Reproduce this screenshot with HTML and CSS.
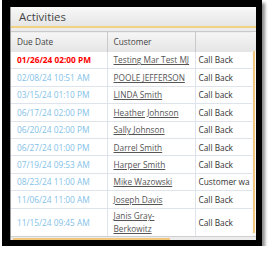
FILE: index.html
```html
<!doctype html>
<html lang="en">
<head>
  <meta charset="utf-8">
  <title>Activities</title>
  <link rel="stylesheet" href="styles.css">
</head>
<body>
  <div class="frame">
    <div class="panel">
      <div class="title">Activities</div>
      <div class="grid">
        <div class="scroller">
          <table>
            <colgroup>
              <col class="col-date">
              <col class="col-customer">
              <col class="col-type">
            </colgroup>
            <thead>
              <tr><th>Due Date</th><th>Customer</th><th></th></tr>
            </thead>
            <tbody>
              <tr><td class="due overdue">01/26/24 02:00 PM</td><td><a href="#">Testing Mar Test MJ</a></td><td>Call Back</td></tr>
              <tr><td class="due">02/08/24 10:51 AM</td><td><a href="#">POOLE JEFFERSON</a></td><td>Call Back</td></tr>
              <tr><td class="due">03/15/24 01:10 PM</td><td><a href="#">LINDA Smith</a></td><td>Call back</td></tr>
              <tr><td class="due">06/17/24 02:00 PM</td><td><a href="#">Heather Johnson</a></td><td>Call Back</td></tr>
              <tr><td class="due">06/20/24 02:00 PM</td><td><a href="#">Sally Johnson</a></td><td>Call Back</td></tr>
              <tr><td class="due">06/27/24 01:00 PM</td><td><a href="#">Darrel Smith</a></td><td>Call Back</td></tr>
              <tr><td class="due">07/19/24 09:53 AM</td><td><a href="#">Harper Smith</a></td><td>Call Back</td></tr>
              <tr><td class="due">08/23/24 11:00 AM</td><td><a href="#">Mike Wazowski</a></td><td>Customer wa</td></tr>
              <tr><td class="due">11/06/24 11:00 AM</td><td><a href="#">Joseph Davis</a></td><td>Call Back</td></tr>
              <tr class="tall"><td class="due">11/15/24 09:45 AM</td><td><a href="#">Janis Gray-<br>Berkowitz</a></td><td>Call Back</td></tr>
            </tbody>
          </table>
        </div>
        <div class="vbar">
          <div class="vbar-head"></div>
          <div class="vbar-track"><div class="vbar-thumb"></div></div>
        </div>
      </div>
      <div class="hbar"><div class="hbar-thumb"></div></div>
    </div>
  </div>
</body>
</html>
```

FILE: styles.css
```css
html,
body {
  margin: 0;
  padding: 0;
  background: white;
  font-family: "Open Sans", Lato, sans-serif;
}

.frame {
  width: 246px;
  height: 233px;
  margin-left: 2px;
  border-style: solid;
  border-color: black;
  border-width: 7px 6px 6px 8px;
  box-shadow: 3px 3px 3px rgba(0, 0, 0, 0.45);
}

.panel {
  height: 233px;
  border-left: 1px solid #9a9a9a;
  background: #ececec;
  display: flex;
  flex-direction: column;
}

.title {
  height: 19px;
  line-height: 19px;
  padding-left: 8px;
  font-size: 11.4px;
  color: #444;
  background: linear-gradient(#f8f8f8, #e6e6e6);
  border-bottom: 2px solid #f1d283;
}

.grid {
  margin-top: 3px;
  display: flex;
  height: 205px;
  background: white;
}

.scroller {
  width: 241px;
  overflow: hidden;
}

table {
  width: 241px;
  table-layout: fixed;
  border-collapse: collapse;
  font-size: 8.3px;
}

.col-date { width: 96px; }
.col-customer { width: 88px; }
.col-type { width: 57px; }

th {
  height: 20px;
  padding: 0 6px;
  text-align: left;
  font-weight: normal;
  color: #444;
  background: linear-gradient(#f6f6f6, #e4e4e4);
  border-top: 1px solid #c9c9c9;
  border-right: 1px solid #c9c9c9;
  box-sizing: border-box;
}

tbody tr {
  height: 17.4px;
}

td {
  padding: 0 6px;
  line-height: 13px;
  color: #333;
  white-space: nowrap;
  overflow: hidden;
  border-right: 1px solid #dfe4ec;
  border-bottom: 1px solid #dfe4ec;
}

td:last-child {
  padding-left: 3px;
  padding-right: 0;
  text-overflow: clip;
}

tr.tall {
  height: 28.4px;
}

td a {
  color: #555;
}

.due {
  color: #83c1e8;
}

.due.overdue {
  color: #f00;
  font-weight: bold;
}

.vbar {
  width: 4px;
  display: flex;
  flex-direction: column;
}

.vbar-head {
  height: 20px;
  background: linear-gradient(#f6f6f6, #e4e4e4);
  border-top: 1px solid #c9c9c9;
  box-sizing: border-box;
}

.vbar-track {
  flex: 1;
  background: #f7f7f7;
  padding: 0 1px 3px 1px;
}

.vbar-thumb {
  width: 2px;
  height: 100%;
  background: #f1c67c;
}

.hbar {
  height: 4px;
  background: #ececec;
  border-top: 1px solid #cfcfcf;
  box-sizing: border-box;
  padding: 1px 0 0 2px;
}

.hbar-thumb {
  width: 157px;
  height: 2px;
  background: #f1c67c;
}
```
